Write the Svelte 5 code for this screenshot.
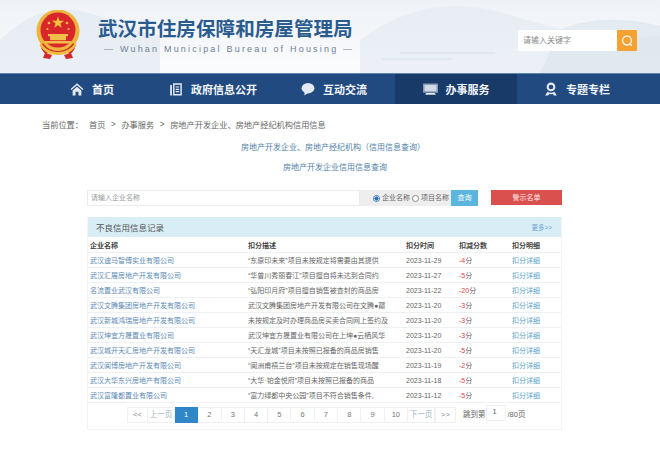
<script lang="ts">
	const navItems = [
		{ key: "home", label: "首页", width: 153 },
		{ key: "doc", label: "政府信息公开", width: 120 },
		{ key: "chat", label: "互动交流", width: 122 },
		{ key: "screen", label: "办事服务", width: 122, active: true },
		{ key: "award", label: "专题专栏", width: 120 },
	];

	const rows = [
		["武汉迪马智傅实业有限公司", "“东原印未来”项目未按规定将需要由其提供", "2023-11-29", "-4"],
		["武汉汇展房地产开发有限公司", "“华曾川秀丽春江”项目擅自将未达到合同约", "2023-11-27", "-5"],
		["名流置业武汉有限公司", "“弘阳印月府”项目擅自销售被查封的商品房", "2023-11-22", "-20"],
		["武汉文腾集团房地产开发有限公司", "武汉文腾集团房地产开发有限公司在文腾●巅", "2023-11-20", "-3"],
		["武汉新城鸿瑞房地产开发有限公司", "未按规定及时办理商品房买卖合同网上签约及", "2023-11-20", "-3"],
		["武汉坤宜方晟置业有限公司", "武汉坤宜方晟置业有限公司在上坤●云栖风华", "2023-11-20", "-3"],
		["武汉城开天汇房地产开发有限公司", "“天汇龙城”项目未按照已报备的商品房销售", "2023-11-20", "-5"],
		["武汉阆博房地产开发有限公司", "“阆洲甫禧兰台”项目未按规定在销售现场醒", "2023-11-19", "-2"],
		["武汉大华东兴房地产有限公司", "“大华·铂金悦府”项目未按照已报备的商品", "2023-11-18", "-5"],
		["武汉富隆都置业有限公司", "“富力绿都中央公园”项目不符合销售条件,", "2023-11-12", "-5"],
	];

	const pages = ["1", "2", "3", "4", "5", "6", "7", "8", "9", "10"];
</script>

{#snippet navIcon(key: string)}
	{#if key === "home"}
		<svg viewBox="0 0 24 24" class="nav-icon"><path d="M12 2 1 12l1.600 1.800L12 5.400l9.400 8.400L23 12z" /><path d="M4.500 14.500 12 8l7.500 6.500V23H14.500v-6.500h-5V23h-5z" /></svg>
	{:else if key === "doc"}
		<svg viewBox="0 0 24 24" class="nav-icon"><path d="M7 2h15v21H7zM9.500 4.500v16h10v-16zM11.500 7.500h6v2h-6zM11.500 11.500h6v2h-6zM11.500 15.500h6v2h-6z" fill-rule="evenodd" /><path d="M2 5h3v18h-3z" /></svg>
	{:else if key === "chat"}
		<svg viewBox="0 0 24 24" class="nav-icon"><ellipse cx="12" cy="10.500" rx="11" ry="9" /><path d="M6 16v7l7-5z" /></svg>
	{:else if key === "screen"}
		<svg viewBox="0 0 24 18" class="nav-icon nav-icon--wide"><path d="M1 0h22a1 1 0 0 1 1 1v13a1 1 0 0 1-1 1H1a1 1 0 0 1-1-1V1a1 1 0 0 1 1-1z" opacity="0.55" /><path d="M2.500 2.500h19v10h-19z" opacity="0.8" /><path d="M5 15.500h14l1.500 2.500h-17z" /></svg>
	{:else}
		<svg viewBox="0 0 24 24" class="nav-icon"><path d="M12 1a7.500 7.500 0 1 0 0 15 7.500 7.500 0 0 0 0-15zm0 3.500a4 4 0 1 1 0 8 4 4 0 0 1 0-8z" fill-rule="evenodd" /><path d="M6 16.500 2 23h5l2-2.500 3 .5 3-.5 2 2.500h5l-4-6.500-3 1.500-3 .5-3-.5z" /></svg>
	{/if}
{/snippet}

<div class="page">
	<header class="masthead">
		<svg class="mist" viewBox="0 0 660 73" preserveAspectRatio="none" aria-hidden="true">
			<path d="M0 40C20 22 40 8 70 10c30 2 50 18 90 26v37H0z" fill="#dde6ee" opacity="0.55" />
			<path d="M360 40C400 10 440 2 480 8s90 34 180 28v37H360z" fill="#e3eaf1" opacity="0.6" />
			<path d="M560 30c30-14 70-12 100-4v47H540z" fill="#d6e0ea" opacity="0.5" />
			<path d="M400 53h95M382 59h70" stroke="#d5dfe8" stroke-width="1" fill="none" />
		</svg>

		<svg class="emblem" viewBox="0 0 46 50" aria-hidden="true">
			<circle cx="23" cy="21" r="21.500" fill="#eeb53e" />
			<circle cx="23" cy="20" r="17.500" fill="#d8262a" />
			<path d="M23 6.500l1.500 4.300h4.500l-3.600 2.700 1.300 4.300L23 15.300l-3.700 2.500 1.300-4.300-3.600-2.700h4.500z" fill="#f5c33e" />
			<circle cx="14" cy="13" r="1.300" fill="#f5c33e" />
			<circle cx="32" cy="13" r="1.300" fill="#f5c33e" />
			<circle cx="12.500" cy="19" r="1.100" fill="#f5c33e" />
			<circle cx="33.500" cy="19" r="1.100" fill="#f5c33e" />
			<path d="M13 24h20v2.200H13zM15 26.200h16v4H15zM10 31h26v2.500H10z" fill="#f2c04a" />
			<path d="M8 33c3 5 9 8 15 8s12-3 15-8l2.500 3c-1 4-3 6-5 8l-6.500-2-6 3-6-3-6.500 2c-2-2-4-4-5-8z" fill="#cf2a26" />
			<path d="M6 33c4 6 10 9 17 9s13-3 17-9l1.500 2c-4 7-11 10-18.500 10S8.500 42 4.500 35z" fill="#f0bb40" />
			<path d="M10 43l7 2-2 4-7-1zM36 43l-7 2 2 4 7-1z" fill="#d2282a" />
		</svg>

		<div class="brand">
			<h1>武汉市住房保障和房屋管理局</h1>
			<p>— Wuhan Municipal Bureau of Housing —</p>
		</div>

		<div class="site-search">
			<span class="site-search__field">请输入关键字</span>
			<span class="site-search__btn">
				<svg viewBox="0 0 20 20"><circle cx="10" cy="9.500" r="5.500" /><path d="M13.500 13.500l2 2" /></svg>
			</span>
		</div>
	</header>

	<nav class="nav">
		{#each navItems as item}
			<div class="nav-item" class:nav-item--active={item.active} style:width="{item.width}px">
				{@render navIcon(item.key)}
				<span>{item.label}</span>
			</div>
		{/each}
	</nav>

	<div class="crumbs">
		<span class="crumbs__lead">当前位置：</span>
		<span>首页</span>
		<i>&gt;</i>
		<span>办事服务</span>
		<i>&gt;</i>
		<span>房地产开发企业、房地产经纪机构信用信息</span>
	</div>

	<p class="heading heading--first">房地产开发企业、房地产经纪机构（信用信息查询）</p>
	<p class="heading heading--second">房地产开发企业信用信息查询</p>

	<main class="content">
		<div class="filters">
			<div class="filters__input">请输入企业名称</div>
			<div class="filters__radios">
				<span class="radio radio--on"></span><span>企业名称</span>
				<span class="radio"></span><span>项目名称</span>
			</div>
			<div class="filters__query">查询</div>
			<div class="filters__warn">警示名单</div>
		</div>

		<section class="panel">
			<div class="panel__head">
				<span>不良信用信息记录</span>
				<a href="#more">更多&gt;&gt;</a>
			</div>

			<div class="row row--head">
				<span>企业名称</span>
				<span>扣分描述</span>
				<span>扣分时间</span>
				<span>扣减分数</span>
				<span>扣分明细</span>
			</div>

			{#each rows as [company, desc, date, score]}
				<div class="row">
					<span class="link">{company}</span>
					<span class="desc">{desc}</span>
					<span>{date}</span>
					<span><em>{score}</em>分</span>
					<span class="link link--detail">扣分详细</span>
				</div>
			{/each}

			<div class="pager">
				<span class="pager__btn pager__btn--arrow">&lt;&lt;</span>
				<span class="pager__btn pager__btn--text">上一页</span>
				{#each pages as page}
					<span class="pager__btn" class:pager__btn--current={page === "1"}>{page}</span>
				{/each}
				<span class="pager__btn pager__btn--text">下一页</span>
				<span class="pager__btn pager__btn--arrow">&gt;&gt;</span>
				<span class="pager__jump">跳到第</span>
				<span class="pager__input">1</span>
				<span class="pager__total">/80页</span>
			</div>
		</section>
	</main>
</div>

<style>
	:global(body) {
		background: #fff;
	}

	.page {
		width: 660px;
		height: 458px;
		overflow: hidden;
		background: #fff;
		color: #666;
		font-family: "Liberation Sans", "Noto Sans CJK SC", sans-serif;
	}

	.masthead {
		position: relative;
		display: flex;
		align-items: flex-start;
		height: 73px;
		background: linear-gradient(180deg, #eef2f6 0%, #f6f8fb 60%, #fbfcfd 100%);
		overflow: hidden;
	}

	.mist {
		position: absolute;
		inset: 0;
		width: 100%;
		height: 100%;
	}

	.emblem {
		position: relative;
		flex: none;
		width: 46px;
		height: 50px;
		margin: 10px 0 0 35px;
	}

	.brand {
		position: relative;
		flex: none;
		width: 270px;
		margin: 16px 0 0 17px;
	}

	.brand h1 {
		margin: 0;
		font-size: 19.600px;
		line-height: 26px;
		font-weight: 700;
		color: #2b5c8f;
		white-space: nowrap;
	}

	.brand p {
		margin: 1px 0 0 6px;
		font-size: 9px;
		line-height: 12px;
		letter-spacing: 2.200px;
		color: #6f8197;
		white-space: nowrap;
	}

	.site-search {
		position: relative;
		display: flex;
		height: 21px;
		margin: 30px 0 0 150px;
	}

	.site-search__field {
		width: 94px;
		padding-left: 5px;
		background: #fff;
		color: #8a8a8a;
		font-size: 8px;
		line-height: 21px;
	}

	.site-search__btn {
		display: flex;
		align-items: center;
		justify-content: center;
		width: 20px;
		border-radius: 1px;
		background: #f5a233;
	}

	.site-search__btn svg {
		width: 16px;
		height: 16px;
		fill: none;
		stroke: #fff;
		stroke-width: 1.600;
		stroke-linecap: round;
	}

	.nav {
		display: flex;
		height: 31px;
		background: #204a80;
		border-top: 1px solid #5f86ad;
		box-sizing: border-box;
	}

	.nav-item {
		display: flex;
		align-items: center;
		justify-content: center;
		gap: 8px;
		flex: none;
		color: #f2f5f9;
		font-size: 11px;
		font-weight: 700;
	}

	.nav-item:first-child {
		justify-content: flex-end;
		padding-right: 39px;
		box-sizing: border-box;
	}

	.nav-item--active {
		background: #183a68;
	}

	.nav-icon {
		width: 14px;
		height: 14px;
		fill: #e4eaf1;
	}

	.nav-icon--wide {
		width: 15px;
		height: 12px;
	}

	.crumbs {
		display: flex;
		align-items: center;
		height: 14px;
		margin: 13px 0 0 42px;
		font-size: 8.200px;
		color: #666;
		white-space: nowrap;
	}

	.crumbs__lead {
		width: 47px;
	}

	.crumbs i {
		width: 16px;
		font-style: normal;
		text-align: center;
	}

	.heading {
		margin: 0;
		padding-left: 6px;
		text-align: center;
		font-size: 8px;
		line-height: 12px;
		white-space: nowrap;
		color: #4f7fa8;
	}

	.heading--first {
		margin-top: 11px;
	}

	.heading--second {
		margin-top: 8px;
		margin-left: 4px;
	}

	.content {
		width: 475px;
		margin: 16px 0 0 87px;
	}

	.filters {
		display: flex;
		height: 16px;
		font-size: 7px;
		line-height: 16px;
	}

	.filters__input {
		width: 273px;
		padding-left: 3px;
		box-sizing: border-box;
		border: 1px solid #ececec;
		color: #999;
		line-height: 14px;
	}

	.filters__radios {
		display: flex;
		align-items: center;
		gap: 2px;
		width: 91px;
		padding-left: 13px;
		box-sizing: border-box;
		background: #eeeeee;
		color: #666;
	}

	.radio {
		flex: none;
		width: 5px;
		height: 5px;
		border: 1px solid #888;
		border-radius: 50%;
		background: #fff;
	}

	.radio--on {
		border-color: #3a78c8;
		background: radial-gradient(circle, #2f6fc4 55%, #fff 60%);
	}

	.filters__query {
		width: 27px;
		background: #5cb5dd;
		color: #fff;
		text-align: center;
	}

	.filters__warn {
		width: 71px;
		margin-left: 13px;
		height: 15px;
		background: #d9504e;
		color: #fbe9e8;
		text-align: center;
		line-height: 15px;
	}

	.panel {
		height: 213px;
		margin-top: 11px;
		border: 1px solid #f1f4f6;
		border-top: 0;
		box-sizing: border-box;
	}

	.panel__head {
		display: flex;
		align-items: center;
		justify-content: space-between;
		height: 20px;
		padding: 0 9px 0 8px;
		background: #d9edf7;
		color: #555;
		font-size: 8.500px;
	}

	.panel__head a {
		color: #6ba3c9;
		font-size: 6.500px;
		text-decoration: none;
	}

	.row {
		display: grid;
		grid-template-columns: 158px 158px 53px 53px 1fr;
		align-items: center;
		height: 15px;
		padding-left: 2px;
		box-sizing: border-box;
		border-bottom: 1px solid #eef1f4;
		font-size: 7px;
		color: #666;
		white-space: nowrap;
		overflow: hidden;
	}

	.row--head {
		height: 16px;
		padding-top: 1px;
		font-weight: 700;
		color: #444;
	}

	.desc {
		overflow: hidden;
	}

	.link {
		color: #5b89b5;
	}

	.link--detail {
		color: #5ba3cd;
	}

	em {
		font-style: normal;
		color: #d9434a;
	}

	.pager {
		display: flex;
		align-items: flex-start;
		margin: 4px 0 0 39px;
		font-size: 7.500px;
	}

	.pager__btn {
		flex: none;
		width: 23.300px;
		height: 16px;
		box-sizing: border-box;
		border: 1px solid #f0f0f0;
		border-left: 0;
		color: #777;
		text-align: center;
		line-height: 14px;
	}

	.pager__btn--arrow {
		width: 21px;
		border-left: 1px solid #f0f0f0;
		color: #8a8a8a;
	}

	.pager__btn--text {
		width: 27px;
		color: #9bb3c8;
	}

	.pager__btn--current {
		border-color: #2f86c9;
		background: #2f86c9;
		color: #fff;
	}

	.pager__jump {
		margin-left: 7px;
		color: #666;
		line-height: 16px;
	}

	.pager__input {
		width: 20px;
		height: 16px;
		margin: -2px 0 0 1px;
		padding-left: 5px;
		box-sizing: border-box;
		border: 1px solid #f0f0f0;
		line-height: 11px;
		color: #666;
	}

	.pager__total {
		margin-left: 1px;
		line-height: 16px;
	}
</style>
